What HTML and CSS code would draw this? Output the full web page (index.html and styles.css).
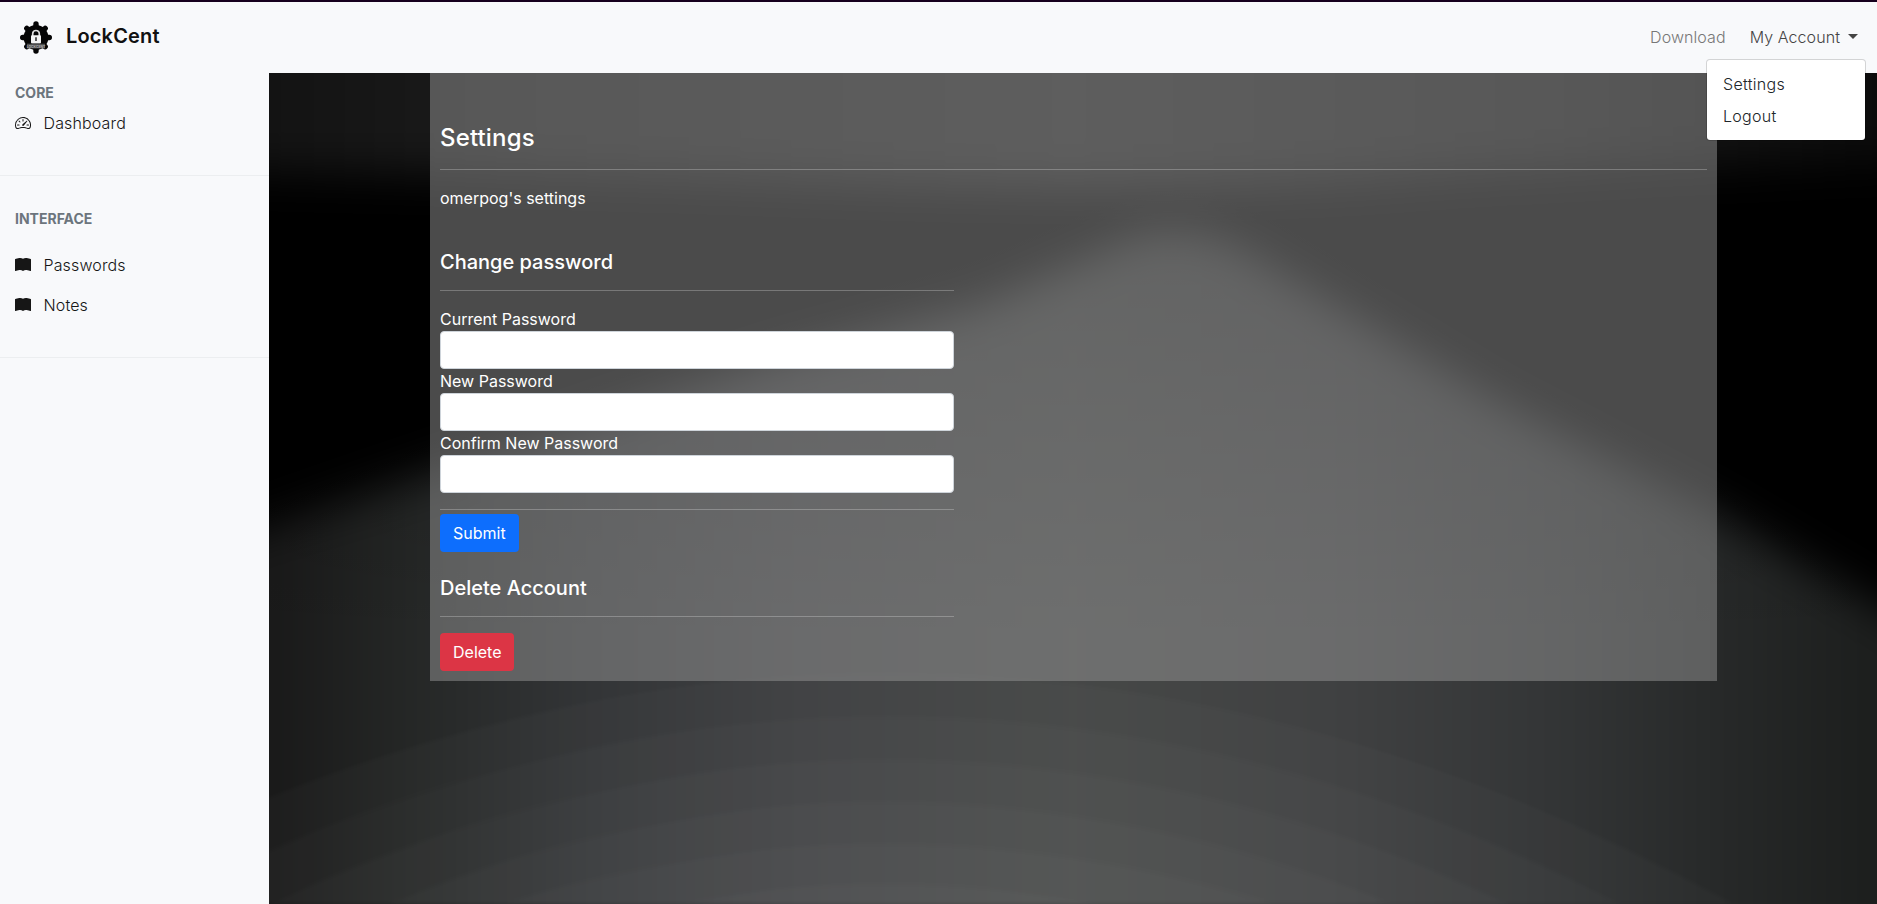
FILE: index.html
```html
<!DOCTYPE html>
<html lang="en">
<head>
<meta charset="utf-8">
<title>LockCent</title>
<link rel="stylesheet" href="styles.css">
</head>
<body>
<header class="topbar">
  <a class="brand">
    <svg class="logo" viewBox="0 0 32 33">
      <circle cx="16" cy="16.5" r="12.4" fill="#050505"/>
      <g fill="none" stroke="#050505" stroke-width="5.4" stroke-linecap="round">
        <path d="M16 3v27M2.7 16.5h26.6M6.8 7.3l18.4 18.4M25.2 7.3L6.8 25.7"/>
      </g>
      <path d="M12.7 15v-2.2a3.3 3.3 0 0 1 6.6 0V15" fill="none" stroke="#ddd" stroke-width="1.7"/>
      <rect x="11" y="14.2" width="10" height="8.3" rx="1" fill="#f4f4f4"/>
      <path d="M16 16.3v3.6" stroke="#333" stroke-width="1.6"/>
      <rect x="7" y="22.7" width="18" height="4.8" fill="#4c4c4c"/>
      <text class="logo-word" x="16" y="26.7" text-anchor="middle">LOCKCENT</text>
    </svg>
    <span class="brand-name">LockCent</span>
  </a>
  <nav class="topnav">
    <a class="download">Download</a>
    <div class="account">
      <a class="account-toggle">My Account<span class="caret"></span></a>
      <div class="menu"><a>Settings</a><a>Logout</a></div>
    </div>
  </nav>
</header>
<div class="layout">
  <aside class="sidebar">
    <section class="group core">
      <h6>CORE</h6>
      <a class="link"><svg class="icon" viewBox="0 0 16 16"><path d="M8 4a.5.5 0 0 1 .5.5V6a.5.5 0 0 1-1 0V4.5A.5.5 0 0 1 8 4zM3.732 5.732a.5.5 0 0 1 .707 0l.915.914a.5.5 0 1 1-.708.708l-.914-.915a.5.5 0 0 1 0-.707zM2 10a.5.5 0 0 1 .5-.5h1.586a.5.5 0 0 1 0 1H2.5A.5.5 0 0 1 2 10zm9.5 0a.5.5 0 0 1 .5-.5h1.5a.5.5 0 0 1 0 1H12a.5.5 0 0 1-.5-.5zm.754-4.246a.389.389 0 0 0-.527-.02L7.547 9.31a.91.91 0 1 0 1.302 1.258l3.434-4.297a.389.389 0 0 0-.029-.518z"/><path fill-rule="evenodd" d="M0 10a8 8 0 1 1 15.547 2.661c-.442 1.253-1.845 1.602-2.932 1.25C11.309 13.488 9.475 13 8 13c-1.474 0-3.31.488-4.615.911-1.087.352-2.49.003-2.932-1.25A7.988 7.988 0 0 1 0 10zm8-7a7 7 0 0 0-6.603 9.329c.203.575.923.876 1.68.63C4.397 12.533 6.358 12 8 12s3.604.532 4.923.96c.757.245 1.477-.056 1.68-.631A7 7 0 0 0 8 3z"/></svg>Dashboard</a>
    </section>
    <section class="group interface">
      <h6>INTERFACE</h6>
      <a class="link"><svg class="icon" viewBox="0 0 16 16"><path d="M8 1.783C7.015.936 5.587.81 4.287.94c-1.514.153-3.042.672-3.994 1.105A.5.5 0 0 0 0 2.5v11a.5.5 0 0 0 .707.455c.882-.4 2.303-.881 3.68-1.02 1.409-.142 2.59.087 3.223.877a.5.5 0 0 0 .78 0c.633-.79 1.814-1.019 3.222-.877 1.378.139 2.8.62 3.681 1.02A.5.5 0 0 0 16 13.5v-11a.5.5 0 0 0-.293-.455c-.952-.433-2.48-.952-3.994-1.105C10.413.809 8.985.936 8 1.783z"/></svg>Passwords</a>
      <a class="link"><svg class="icon" viewBox="0 0 16 16"><path d="M8 1.783C7.015.936 5.587.81 4.287.94c-1.514.153-3.042.672-3.994 1.105A.5.5 0 0 0 0 2.5v11a.5.5 0 0 0 .707.455c.882-.4 2.303-.881 3.68-1.02 1.409-.142 2.59.087 3.223.877a.5.5 0 0 0 .78 0c.633-.79 1.814-1.019 3.222-.877 1.378.139 2.8.62 3.681 1.02A.5.5 0 0 0 16 13.5v-11a.5.5 0 0 0-.293-.455c-.952-.433-2.48-.952-3.994-1.105C10.413.809 8.985.936 8 1.783z"/></svg>Notes</a>
    </section>
  </aside>
  <main class="stage">
    <svg class="backdrop" viewBox="0 0 1608 831" preserveAspectRatio="none">
      <defs>
        <linearGradient id="topglow" gradientUnits="userSpaceOnUse" x1="0" y1="0" x2="1608" y2="0">
          <stop offset="0" stop-color="#131313"/><stop offset=".15" stop-color="#1b1b1b"/><stop offset=".5" stop-color="#262626"/><stop offset=".8" stop-color="#1a1a1a"/><stop offset="1" stop-color="#0b0b0b"/>
        </linearGradient>
        <linearGradient id="ground" gradientUnits="userSpaceOnUse" x1="0" y1="0" x2="1608" y2="0">
          <stop offset="0" stop-color="#191919"/><stop offset=".08" stop-color="#242625"/><stop offset=".2" stop-color="#333537"/><stop offset=".33" stop-color="#3f4042"/><stop offset=".5" stop-color="#464847"/><stop offset=".66" stop-color="#404142"/><stop offset=".8" stop-color="#333536"/><stop offset=".9" stop-color="#272929"/><stop offset="1" stop-color="#1c1e1d"/>
        </linearGradient>
        <linearGradient id="dim" x1="0" y1="0" x2="0" y2="1">
          <stop offset=".15" stop-opacity=".32"/><stop offset=".45" stop-opacity=".13"/><stop offset=".68" stop-opacity="0"/>
        </linearGradient>
        <filter id="soft" x="-10%" y="-20%" width="120%" height="140%" color-interpolation-filters="sRGB"><feGaussianBlur stdDeviation="22"/></filter>
        <filter id="faint" x="-10%" y="-20%" width="120%" height="140%" color-interpolation-filters="sRGB"><feGaussianBlur stdDeviation="2"/></filter>
      </defs>
      <rect width="1608" height="831" fill="#000"/>
      <rect width="1608" height="831" fill="url(#dim)"/>
      <path d="M-80 480L0 452L161 400L507 285L713 230L830 180Q905 135 980 180L1228 328L1448 440L1608 532L1700 585V920H-80Z" fill="url(#ground)" filter="url(#soft)"/>
      <rect width="1608" height="831" fill="url(#dim)"/>
      <path d="M-80-80H1688V88Q1300 92 1100 108Q850 120 600 112Q300 102-80 98Z" fill="url(#topglow)" filter="url(#soft)"/>
      <g fill="#fff" fill-opacity=".018" filter="url(#faint)">
        <path d="M-226 831Q620 369 1466 831Z"/>
        <path d="M-113 831Q620 457 1353 831Z"/>
        <path d="M0 831Q620 543 1240 831Z"/>
        <path d="M118 831Q620 627 1122 831Z"/>
        <path d="M235 831Q620 711 1005 831Z"/>
        <path d="M410 831Q620 791 830 831Z"/>
      </g>
    </svg>
    <div class="panel">
      <h4>Settings</h4>
      <hr>
      <p>omerpog's settings</p>
      <div class="column">
        <h5>Change password</h5>
        <hr>
        <form>
          <label>Current Password</label><input type="password">
          <label>New Password</label><input type="password">
          <label>Confirm New Password</label><input type="password">
          <hr class="tight">
          <button type="button" class="btn primary">Submit</button>
        </form>
        <h5 class="delete-title">Delete Account</h5>
        <hr>
        <button type="button" class="btn danger">Delete</button>
      </div>
    </div>
  </main>
</div>
</body>
</html>
```
FILE: styles.css
```css
* { box-sizing: border-box; }
body {
  margin: 0;
  height: 904px;
  overflow: hidden;
  display: flex;
  flex-direction: column;
  font: 400 16px/24px Inter, "Liberation Sans", sans-serif;
  color: #212529;
  background: #f8f9fa;
}
h4, h5, h6, p { margin: 0; }
.topbar {
  flex: none;
  display: flex;
  justify-content: space-between;
  height: 73px;
  border-top: 2px solid #16001e;
  background: #f8f9fb;
}
.brand { display: flex; padding: 19px 0 0 20px; }
.logo { width: 32px; height: 33px; }
.logo-word { font: 700 3.4px Inter, sans-serif; fill: #aaa; }
.brand-name { margin: 0 0 0 14px; font-size: 20px; line-height: 30px; font-weight: 600; letter-spacing: .16px; color: #111; }
.topnav { display: flex; gap: 24px; padding: 23px 19px 0 0; font-weight: 300; letter-spacing: .08px; }
.download { color: #777; }
.account { position: relative; }
.account-toggle { display: flex; align-items: center; color: #444; }
.caret { margin: -2px 0 0 8px; border: 5px solid transparent; border-top-color: #444; border-bottom: 0; }
.menu {
  position: absolute;
  z-index: 2;
  top: 34px;
  right: -8px;
  width: 160px;
  height: 82px;
  padding: 12px 16px;
  display: flex;
  flex-direction: column;
  gap: 8px;
  border: 1px solid rgba(0, 0, 0, .15);
  border-radius: 4px;
  background: #fff;
  background-clip: padding-box;
  letter-spacing: .3px;
}
.menu a { color: #212529; }
.layout { flex: 1; display: flex; min-height: 0; }
.sidebar { width: 269px; background: #f8f9fb; }
.group { padding-left: 15px; border-bottom: 1px solid #eceef0; }
.group h6 { font-size: 14px; line-height: 20px; font-weight: 700; color: #6c757d; }
.core { height: 103px; padding-top: 10px; }
.interface { height: 182px; padding-top: 33px; }
.interface h6 { margin-bottom: 16px; }
.link { display: flex; align-items: center; height: 40px; font-weight: 300; letter-spacing: .14px; color: #161616; }
.icon { width: 16px; height: 16px; margin-right: 12.5px; fill: #161616; }
.stage { position: relative; flex: 1; background: #000; }
.backdrop { position: absolute; inset: 0; width: 100%; height: 100%; }
.panel {
  position: relative;
  width: 1287px;
  height: 608px;
  margin-left: 161px;
  padding: 50px 10px 10px;
  color: #fff;
  background: rgba(149, 149, 149, .5);
}
.panel h4 { font-size: 24px; line-height: 30px; font-weight: 500; letter-spacing: .15px; }
hr { height: 1px; margin: 16px 0; border: 0; color: inherit; background: currentColor; opacity: .25; }
.panel p { margin-bottom: 40px; }
.column { width: 514px; }
.column h5 { font-size: 20px; line-height: 24px; font-weight: 500; }
form { display: flex; flex-direction: column; }
label { height: 24px; }
input { width: 514px; height: 38px; border: 1px solid #ced4da; border-radius: 4px; background: #fff; }
hr.tight { width: 100%; margin-bottom: 4px; }
.btn {
  align-self: flex-start;
  height: 38px;
  padding: 0 13px;
  border: 0;
  border-radius: 4px;
  font: inherit;
  color: #fff;
}
.primary { background: #0d6efd; }
.danger { background: #dc3545; }
.delete-title { margin-top: 24px; }
```
